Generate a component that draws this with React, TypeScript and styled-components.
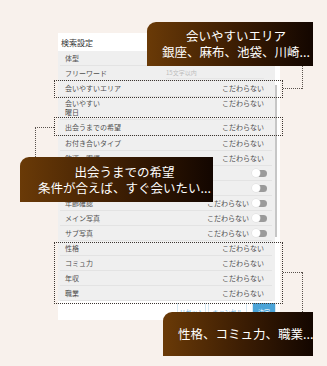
import styled, { createGlobalStyle } from 'styled-components'

const GlobalStyle = createGlobalStyle`
  html, body {
    margin: 0;
    padding: 0;
    background: #f8f1ec;
  }
  body {
    font-family: "Noto Sans CJK JP", "Noto Sans", sans-serif;
  }
`

const Stage = styled.div`
  position: relative;
  width: 327px;
  height: 366px;
  overflow: hidden;
  box-sizing: border-box;
  padding: 33px 0 0 58px;
`

const Panel = styled.div`
  width: 222px;
  background: #fff;
  display: flex;
  flex-direction: column;
`

const Header = styled.div`
  height: 18px;
  display: flex;
  align-items: center;
  padding-left: 3px;
  font-size: 8px;
  color: #333;
`

const Body = styled.div`
  display: flex;
`

const List = styled.div`
  width: 217px;
  background: #efefef;
`

const Row = styled.div<{ $h?: number; $top?: boolean; $toggle?: boolean }>`
  height: ${p => p.$h ?? 15}px;
  box-sizing: border-box;
  margin: 0 3px 0 2px;
  padding: ${p => (p.$top ? '2px' : '0')} ${p => (p.$toggle ? '5px' : '8px')} 0 5px;
  display: flex;
  align-items: ${p => (p.$top ? 'flex-start' : 'center')};
  justify-content: space-between;
  border-bottom: 1px solid #e3e3e3;
  font-size: 7px;
  line-height: 9px;
  color: #4f4f4f;
`

const Placeholder = styled.span`
  flex: 1;
  margin-left: 59px;
  padding-bottom: 1px;
  border-bottom: 1px solid #e6e6e6;
  color: #bdbdbd;
  font-size: 6px;
`

const Value = styled.div`
  display: flex;
  align-items: center;
  gap: 4px;
`

const Toggle = styled.span`
  position: relative;
  width: 14px;
  height: 7px;
  border-radius: 4px;
  background: #9a9a9a;
  &::after {
    content: '';
    position: absolute;
    left: -1px;
    top: -1px;
    width: 8px;
    height: 8px;
    border-radius: 50%;
    background: #fff;
    box-shadow: 0 0 0 0.5px #ddd;
  }
`

const ScrollCol = styled.div`
  width: 5px;
  padding-top: 34px;
  display: flex;
  justify-content: flex-start;
`

const ScrollBar = styled.div`
  width: 2px;
  height: 152px;
  background: #c6c6c6;
`

const Footer = styled.div`
  height: 19px;
  display: flex;
  justify-content: flex-end;
  align-items: flex-start;
  padding: 2px 4px 0 0;
  box-sizing: border-box;
`

const FootButton = styled.div<{ $w: number; $primary?: boolean; $gap?: number }>`
  width: ${p => p.$w}px;
  height: 17px;
  margin-left: ${p => p.$gap ?? 2}px;
  display: flex;
  align-items: center;
  justify-content: center;
  font-size: 6px;
  color: ${p => (p.$primary ? '#fff' : '#6aaedb')};
  background: ${p => (p.$primary ? '#4aa3d7' : '#fff')};
  border-left: 1px solid #d6e8f3;
  border-right: 1px solid #d6e8f3;
  box-sizing: border-box;
`

const Highlight = styled.div<{ $x: number; $y: number; $w: number; $h: number }>`
  position: absolute;
  left: ${p => p.$x}px;
  top: ${p => p.$y}px;
  width: ${p => p.$w}px;
  height: ${p => p.$h}px;
  box-sizing: border-box;
  border: 1px dotted #3c3530;
`

const HLine = styled.div<{ $x: number; $y: number; $len: number }>`
  position: absolute;
  left: ${p => p.$x}px;
  top: ${p => p.$y}px;
  width: ${p => p.$len}px;
  border-top: 1px dotted #5a524c;
`

const VLine = styled.div<{ $x: number; $y: number; $len: number }>`
  position: absolute;
  left: ${p => p.$x}px;
  top: ${p => p.$y}px;
  height: ${p => p.$len}px;
  border-left: 1px dotted #5a524c;
`

const Bubble = styled.div<{ $x: number; $y: number; $w: number; $h: number; $left?: boolean; $pl?: number }>`
  position: absolute;
  left: ${p => p.$x}px;
  top: ${p => p.$y}px;
  width: ${p => p.$w}px;
  height: ${p => p.$h}px;
  box-sizing: border-box;
  padding-left: ${p => p.$pl ?? 0}px;
  border-top-left-radius: 9px;
  background: linear-gradient(to right, #6a3a07, #3a1c03 55%, #130600);
  color: #fff;
  font-size: 12.5px;
  line-height: 16px;
  display: flex;
  flex-direction: column;
  justify-content: center;
  align-items: ${p => (p.$left ? 'flex-start' : 'center')};
  white-space: nowrap;
`

type Item = { label: string; value?: string; toggle?: boolean }

const lower: Item[] = [
  { label: 'お付き合いタイプ', value: 'こだわらない' },
  { label: '飲酒・喫煙', value: 'こだわらない' },
  { label: 'オンライン', toggle: true },
  { label: 'ログイン', toggle: true },
  { label: '年齢確認', value: 'こだわらない', toggle: true },
  { label: 'メイン写真', value: 'こだわらない', toggle: true },
  { label: 'サブ写真', value: 'こだわらない', toggle: true },
  { label: '性格', value: 'こだわらない' },
  { label: 'コミュ力', value: 'こだわらない' },
  { label: '年収', value: 'こだわらない' },
  { label: '職業', value: 'こだわらない' },
]

export default function App() {
  return (
    <>
      <GlobalStyle />
      <Stage>
        <Panel>
          <Header>検索設定</Header>
          <Body>
            <List>
              <Row>体型</Row>
              <Row>
                フリーワード
                <Placeholder>15文字以内</Placeholder>
              </Row>
              <Row $h={16}>
                会いやすいエリア
                <span>こだわらない</span>
              </Row>
              <Row $h={23} $top>
                <span>
                  会いやすい
                  <br />
                  曜日
                </span>
                <span>こだわらない</span>
              </Row>
              <Row $h={16}>
                出会うまでの希望
                <span>こだわらない</span>
              </Row>
              {lower.map(item => (
                <Row key={item.label} $toggle={item.toggle}>
                  {item.label}
                  <Value>
                    {item.value && <span>{item.value}</span>}
                    {item.toggle && <Toggle />}
                  </Value>
                </Row>
              ))}
            </List>
            <ScrollCol>
              <ScrollBar />
            </ScrollCol>
          </Body>
          <Footer>
            <FootButton $w={29}>リセット</FootButton>
            <FootButton $w={39}>キャンセル</FootButton>
            <FootButton $w={24} $gap={5} $primary>
              決定
            </FootButton>
          </Footer>
        </Panel>

        <Highlight $x={54} $y={80} $w={229} $h={18} />
        <Highlight $x={54} $y={117} $w={229} $h={19} />
        <Highlight $x={54} $y={242} $w={229} $h={62} />

        <HLine $x={283} $y={88} $len={19} />
        <VLine $x={302} $y={66} $len={23} />
        <HLine $x={35} $y={127} $len={19} />
        <VLine $x={35} $y={127} $len={30} />
        <HLine $x={283} $y={272} $len={19} />
        <VLine $x={302} $y={272} $len={40} />

        <Bubble $x={147} $y={22} $w={166} $h={44} $pl={12}>
          <span>会いやすいエリア</span>
          <span>銀座、麻布、池袋、川崎...</span>
        </Bubble>
        <Bubble $x={20} $y={157} $w={193} $h={45} $pl={16}>
          <span>出会うまでの希望</span>
          <span>条件が合えば、すぐ会いたい...</span>
        </Bubble>
        <Bubble $x={163} $y={312} $w={150} $h={44} $left $pl={15}>
          <span>性格、コミュ力、職業...</span>
        </Bubble>
      </Stage>
    </>
  )
}
